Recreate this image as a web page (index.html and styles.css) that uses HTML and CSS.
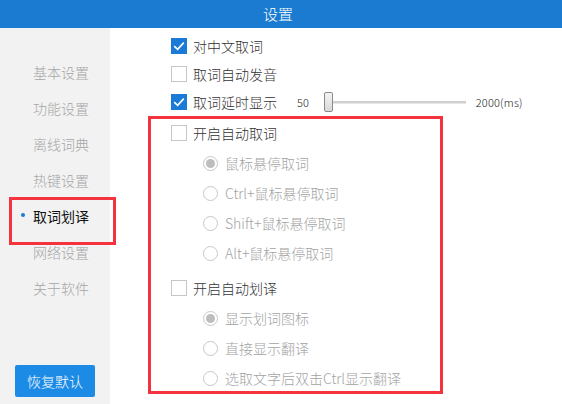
FILE: index.html
```html
<!DOCTYPE html>
<html lang="zh-CN">
<head>
<meta charset="utf-8">
<title>设置</title>
<link rel="stylesheet" href="styles.css">
</head>
<body>
<header class="titlebar">设置</header>
<div class="layout">
  <aside class="sidebar">
    <nav class="menu">
      <div class="menu-item">基本设置</div>
      <div class="menu-item">功能设置</div>
      <div class="menu-item">离线词典</div>
      <div class="menu-item">热键设置</div>
      <div class="menu-item active">取词划译</div>
      <div class="menu-item">网络设置</div>
      <div class="menu-item">关于软件</div>
    </nav>
    <button class="reset">恢复默认</button>
  </aside>
  <main class="content">
    <div class="row top">
      <span class="check on"><svg viewBox="0 0 16 16" width="16" height="16"><polyline points="3.2,8.2 6.6,11.4 12.8,4.6" fill="none" stroke="#fff" stroke-width="1.6"/></svg></span>
      <span class="label">对中文取词</span>
    </div>
    <div class="row top">
      <span class="check"></span>
      <span class="label">取词自动发音</span>
    </div>
    <div class="row top">
      <span class="check on"><svg viewBox="0 0 16 16" width="16" height="16"><polyline points="3.2,8.2 6.6,11.4 12.8,4.6" fill="none" stroke="#fff" stroke-width="1.6"/></svg></span>
      <span class="label">取词延时显示</span>
      <span class="val min">50</span>
      <div class="slider"><span class="thumb"></span></div>
      <span class="val max">2000(ms)</span>
    </div>
    <section class="auto-box">
      <div class="group">
        <div class="row">
          <span class="check"></span>
          <span class="label">开启自动取词</span>
        </div>
        <div class="row sub"><span class="radio on"></span><span class="label muted">鼠标悬停取词</span></div>
        <div class="row sub"><span class="radio"></span><span class="label muted">Ctrl+鼠标悬停取词</span></div>
        <div class="row sub"><span class="radio"></span><span class="label muted">Shift+鼠标悬停取词</span></div>
        <div class="row sub"><span class="radio"></span><span class="label muted">Alt+鼠标悬停取词</span></div>
      </div>
      <div class="group second">
        <div class="row">
          <span class="check"></span>
          <span class="label">开启自动划译</span>
        </div>
        <div class="row sub"><span class="radio on"></span><span class="label muted">显示划词图标</span></div>
        <div class="row sub"><span class="radio"></span><span class="label muted">直接显示翻译</span></div>
        <div class="row sub"><span class="radio"></span><span class="label muted">选取文字后双击Ctrl显示翻译</span></div>
      </div>
    </section>
  </main>
</div>
</body>
</html>
```

FILE: styles.css
```css
* { box-sizing: border-box; }
html, body { margin: 0; padding: 0; }
body {
  width: 562px;
  height: 404px;
  overflow: hidden;
  background: #fff;
  font-family: "Noto Sans CJK SC", "Microsoft YaHei", sans-serif;
  font-size: 14px;
  font-weight: 300;
  color: #333;
}
.titlebar {
  height: 28px;
  background: #1a7bd0;
  color: #fff;
  font-size: 15px;
  line-height: 28px;
  text-align: center;
  padding-right: 6px;
}
.layout {
  display: flex;
  height: 376px;
}
.sidebar {
  width: 110px;
  flex: none;
  background: #f2f2f2;
  display: flex;
  flex-direction: column;
}
.menu {
  padding-top: 26px;
}
.menu-item {
  position: relative;
  height: 36px;
  line-height: 36px;
  padding-left: 33px;
  color: #a6a6a6;
  font-size: 14px;
}
.menu-item.active {
  color: #111;
  font-weight: 400;
}
.menu-item.active::before {
  content: "";
  position: absolute;
  left: 21px;
  top: 15px;
  width: 4px;
  height: 4px;
  border-radius: 50%;
  background: #1a7bd0;
}
.menu-item.active::after {
  content: "";
  position: absolute;
  left: 9px;
  top: -1px;
  width: 101px;
  height: 42px;
  border: 3px solid #f5333f;
}
.reset {
  margin: auto 0 7px 15px;
  width: 80px;
  height: 32px;
  border: none;
  border-radius: 2px;
  background: #1c8be6;
  color: #fff;
  font-family: inherit;
  font-size: 14px;
  font-weight: 300;
  padding: 0;
}
.content {
  flex: 1;
  padding-top: 4px;
  padding-left: 38px;
}
.row {
  display: flex;
  align-items: center;
  height: 30px;
}
.row.top {
  height: 28px;
  padding-left: 23px;
}
.check {
  width: 16px;
  height: 16px;
  flex: none;
  border: 1px solid #c6c6c6;
  background: #fff;
  display: flex;
}
.check.on {
  border-color: #1a7bd6;
  background: #1a7bd6;
}
.check svg { margin: -1px; }
.label {
  margin-left: 6px;
  white-space: nowrap;
}
.label.muted {
  color: #a3a3a3;
  margin-left: 7px;
}
.radio {
  width: 15px;
  height: 15px;
  flex: none;
  border: 1px solid #c8c8c8;
  border-radius: 50%;
  background: #fff;
  display: flex;
  align-items: center;
  justify-content: center;
}
.radio.on::after {
  content: "";
  width: 9px;
  height: 9px;
  border-radius: 50%;
  background: #bdbdbd;
}
.val {
  font-size: 11px;
  color: #222;
}
.val.min { margin-left: 20px; }
.val.max { margin-left: 10px; letter-spacing: 0.2px; }
.slider {
  position: relative;
  margin-left: 15px;
  width: 142px;
  height: 20px;
  display: flex;
  align-items: center;
}
.slider::before {
  content: "";
  flex: 1;
  height: 2px;
  background: #cfcfcf;
  border-bottom: 1px solid #e6e6e6;
}
.thumb {
  position: absolute;
  left: 0;
  top: 0;
  width: 9px;
  height: 20px;
  border: 1px solid #8a8a8a;
  border-radius: 2px;
  background: linear-gradient(#f4f4f4, #d8d8d8);
}
.auto-box {
  width: 295px;
  height: 278px;
  border: 3px solid #f5333f;
  padding-left: 20px;
}
.group:first-child { margin-top: -1px; }
.group.second { margin-top: 5px; }
.row.sub {
  padding-left: 32px;
}
```
